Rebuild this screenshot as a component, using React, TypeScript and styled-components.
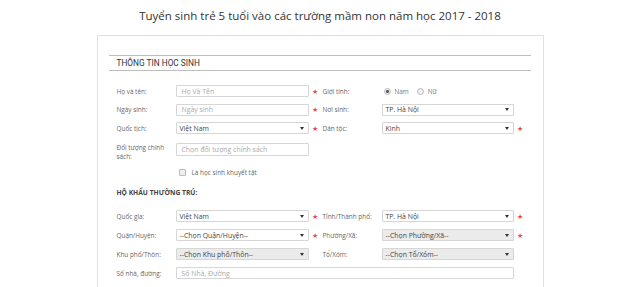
import React from 'react'
import styled, { createGlobalStyle } from 'styled-components'

const GlobalStyle = createGlobalStyle`
  html, body {
    margin: 0;
    padding: 0;
    background: #fff;
    font-family: "Open Sans", "Liberation Sans", sans-serif;
  }
`

const Page = styled.div`
  width: 640px;
  height: 287px;
  overflow: hidden;
`

const Title = styled.h1`
  margin: 0;
  padding-top: 7px;
  height: 28px;
  box-sizing: border-box;
  text-align: center;
  font-size: 11.5px;
  font-weight: 400;
  line-height: 18px;
  color: #333;
`

const Card = styled.div`
  width: 447px;
  margin: 0 auto;
  margin-top: 7px;
  box-sizing: border-box;
  border: 1px solid #e0e0e0;
  border-bottom: none;
  padding: 19px 12px 0 11px;
  height: 260px;
  background: #fff;
`

const SectionHead = styled.div`
  border-top: 1px solid #bdbdbd;
  border-bottom: 1px solid #bdbdbd;
  height: 14px;
  display: flex;
  align-items: center;
  padding-left: 8px;
  font-family: Roboto, "Liberation Sans", sans-serif;
  font-size: 8.3px;
  color: #333;
`

const Form = styled.div`
  padding: 14px 0 0 8px;
  display: flex;
  flex-direction: column;
  font-size: 6.4px;
  line-height: 9px;
`

const Row = styled.div<{ tall?: boolean; space?: number }>`
  display: grid;
  grid-template-columns: 59px 133px 14px 59px 132px 14px;
  grid-template-rows: ${({ tall }) => (tall ? '18px' : '12px')};
  align-items: ${({ tall }) => (tall ? 'start' : 'center')};
  margin-bottom: ${({ space }) => (space ?? 6.5) + 'px'};
`

const Label = styled.div`
  color: #666;
`

const Box = styled.div<{ disabled?: boolean; placeholder?: boolean; high?: number }>`
  height: ${({ high }) => (high ?? 12) + 'px'};
  box-sizing: border-box;
  border: 1px solid #d6d6d6;
  border-radius: 1px;
  background: ${({ disabled }) => (disabled ? '#ebebeb' : '#fff')};
  display: flex;
  align-items: center;
  justify-content: space-between;
  padding: 0 4px 0 ${({ placeholder }) => (placeholder ? '5px' : '3px')};
  font-size: 6.9px;
  color: ${({ placeholder }) => (placeholder ? '#aaa' : '#444')};
  white-space: nowrap;
  overflow: hidden;
`

const Arrow = styled.span`
  width: 0;
  height: 0;
  border-left: 2px solid transparent;
  border-right: 2px solid transparent;
  border-top: 3px solid #333;
`

const Star = styled.span`
  color: #e8484c;
  font-size: 6.5px;
  padding-left: 3px;
`

const Radios = styled.div`
  display: flex;
  align-items: center;
  padding-left: 2px;
  color: #777;
`

const Radio = styled.span<{ checked?: boolean }>`
  width: 5px;
  height: 5px;
  border-radius: 50%;
  border: 1px solid #bbb;
  background: ${({ checked }) => (checked ? 'radial-gradient(circle, #555 0 1.3px, #eee 1.6px)' : '#eee')};
  margin-right: 4px;
`

const RadioText = styled.span`
  margin-right: 8px;
`

const CheckRow = styled.div`
  display: flex;
  align-items: center;
  padding-left: 62px;
  height: 10px;
  margin-bottom: 11px;
  color: #666;
`

const Check = styled.span`
  width: 5px;
  height: 5px;
  border: 1px solid #bbb;
  border-radius: 1px;
  background: #eee;
  margin-right: 6px;
`

const SubHead = styled.div`
  font-size: 6.7px;
  font-weight: 700;
  color: #444;
  height: 10px;
  line-height: 10px;
  margin-bottom: 12px;
`

const Wide = styled.div`
  grid-column: 2 / 6;
`

function Select({ value, disabled, placeholder }: { value: string; disabled?: boolean; placeholder?: boolean }) {
  return (
    <Box disabled={disabled} placeholder={placeholder}>
      <span>{value}</span>
      <Arrow />
    </Box>
  )
}

function Req({ on = true }: { on?: boolean }) {
  return <div>{on && <Star>★</Star>}</div>
}

export default function App() {
  return (
    <Page>
      <GlobalStyle />
      <Title>Tuyển sinh trẻ 5 tuổi vào các trường mầm non năm học 2017 - 2018</Title>
      <Card>
        <SectionHead>THÔNG TIN HỌC SINH</SectionHead>
        <Form>
          <Row>
            <Label>Họ và tên:</Label>
            <Box placeholder>Họ Và Tên</Box>
            <Req />
            <Label>Giới tính:</Label>
            <Radios>
              <Radio checked />
              <RadioText>Nam</RadioText>
              <Radio />
              <RadioText>Nữ</RadioText>
            </Radios>
            <div />
          </Row>
          <Row>
            <Label>Ngày sinh:</Label>
            <Box placeholder>Ngày sinh</Box>
            <Req />
            <Label>Nơi sinh:</Label>
            <Select value="TP. Hà Nội" />
            <div />
          </Row>
          <Row space={9}>
            <Label>Quốc tịch:</Label>
            <Select value="Việt Nam" />
            <Req />
            <Label>Dân tộc:</Label>
            <Select value="Kinh" />
            <Req />
          </Row>
          <Row tall space={6}>
            <Label>Đối tượng chính sách:</Label>
            <Box placeholder high={13}>Chọn đối tượng chính sách</Box>
          </Row>
          <CheckRow>
            <Check />
            Là học sinh khuyết tật
          </CheckRow>
          <SubHead>HỘ KHẨU THƯỜNG TRÚ:</SubHead>
          <Row space={7}>
            <Label>Quốc gia:</Label>
            <Select value="Việt Nam" />
            <Req />
            <Label>Tỉnh/Thành phố:</Label>
            <Select value="TP. Hà Nội" />
            <Req />
          </Row>
          <Row space={7}>
            <Label>Quận/Huyện:</Label>
            <Select value="--Chọn Quận/Huyện--" />
            <Req />
            <Label>Phường/Xã:</Label>
            <Select value="--Chọn Phường/Xã--" disabled />
            <Req />
          </Row>
          <Row space={7}>
            <Label>Khu phố/Thôn:</Label>
            <Select value="--Chọn Khu phố/Thôn--" disabled />
            <Req on={false} />
            <Label>Tổ/Xóm:</Label>
            <Select value="--Chọn Tổ/Xóm--" disabled />
            <Req on={false} />
          </Row>
          <Row>
            <Label>Số nhà, đường:</Label>
            <Wide>
              <Box placeholder>Số Nhà, Đường</Box>
            </Wide>
          </Row>
        </Form>
      </Card>
    </Page>
  )
}
